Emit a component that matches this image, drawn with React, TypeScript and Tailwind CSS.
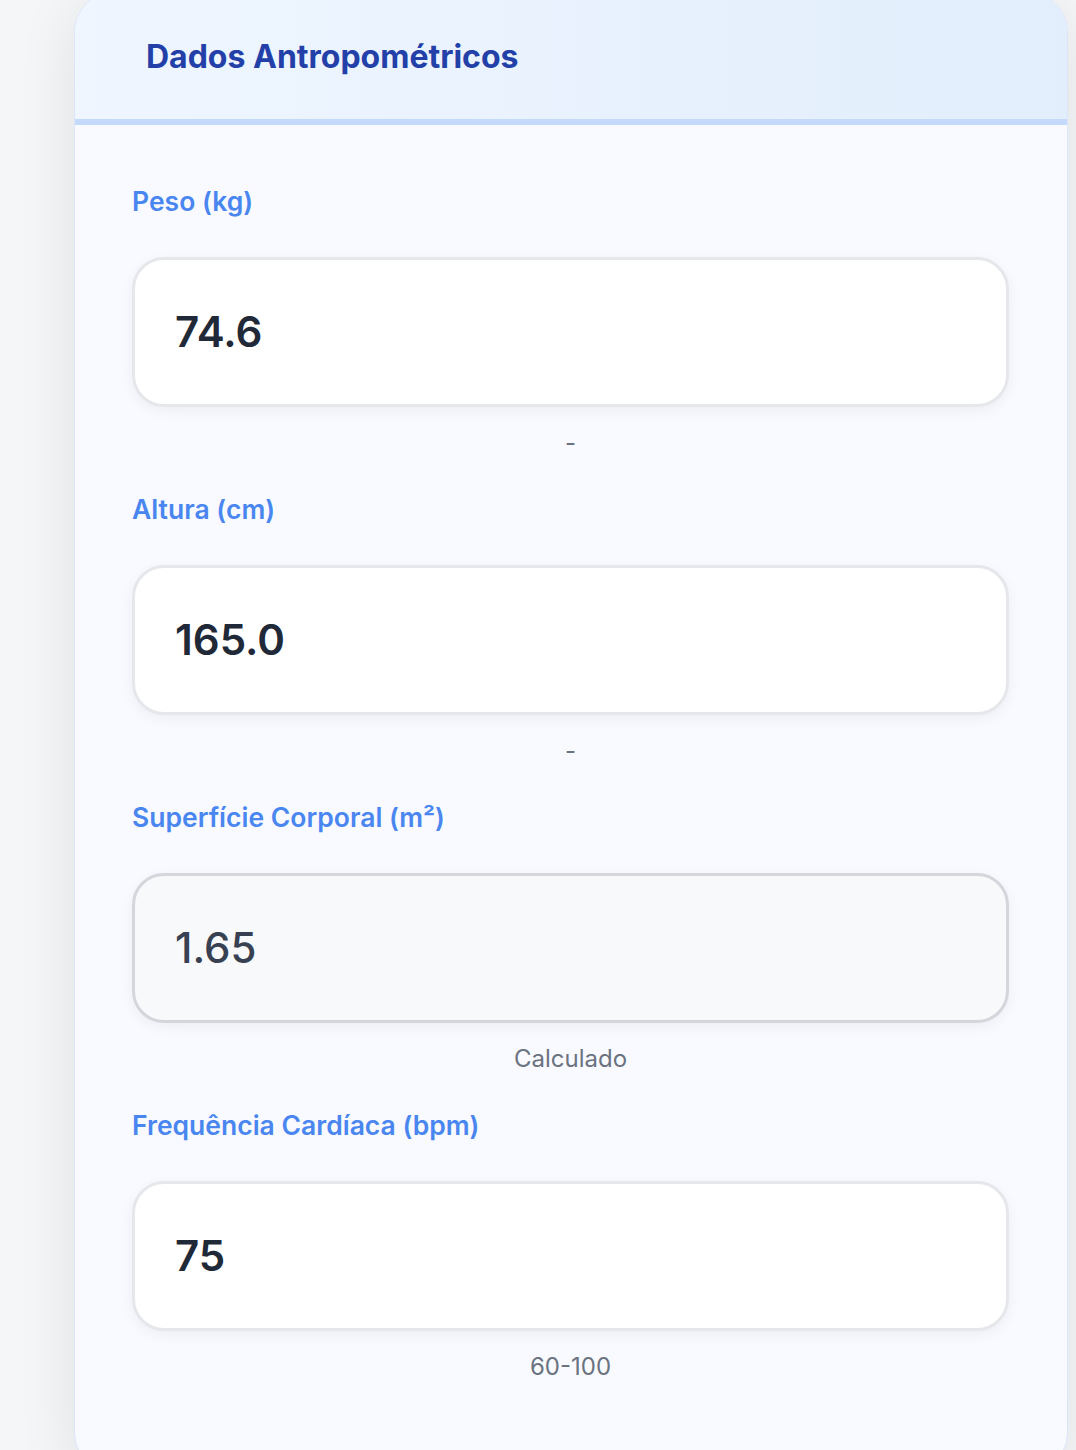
import React from "react";

type Field = { label: string; value: string; hint: string; computed?: boolean };

const fields: Field[] = [
  { label: "Peso (kg)", value: "74.6", hint: "-" },
  { label: "Altura (cm)", value: "165.0", hint: "-" },
  { label: "Superfície Corporal (m²)", value: "1.65", hint: "Calculado", computed: true },
  { label: "Frequência Cardíaca (bpm)", value: "75", hint: "60-100" },
];

export default function App() {
  return (
    <div
      className="h-[1450px] overflow-hidden bg-[#f5f6f8] pl-[74px] pr-[8px]"
      style={{ fontFamily: "Inter, 'Noto Sans', sans-serif" }}
    >
      <div className="-mt-[8px] rounded-[40px] border border-[#dde5fb] bg-[#f8faff] shadow-[0_10px_60px_rgba(0,0,0,0.09)] overflow-hidden">
        <div className="flex h-[132px] items-center border-b-[6px] border-[#c3dafa] bg-gradient-to-r from-[#eff6ff] to-[#e2eefc] pl-[71px] pt-[2px]">
          <h2 className="text-[32px] font-bold leading-[40px] text-[#2340a8]">
            Dados Antropométricos
          </h2>
        </div>
        <div className="flex flex-col gap-[33px] pl-[57px] pr-[58px] pt-[58px] pb-[90px]">
          {fields.map((f) => (
            <div key={f.label} className="flex flex-col">
              <label className="mt-[2px] mb-[40px] text-[26.5px] font-semibold leading-[32px] text-[#4a86f0]">
                {f.label}
              </label>
              <div
                className={
                  f.computed
                    ? "flex h-[150px] items-center rounded-[32px] border-[3px] border-[#d4d6db] bg-[#f8f9fb] pl-[40px] shadow-[0_4px_14px_rgba(0,0,0,0.05)]"
                    : "flex h-[150px] items-center rounded-[32px] border-[3px] border-[#e5e7eb] bg-white pl-[40px] shadow-[0_4px_14px_rgba(0,0,0,0.05)]"
                }
              >
                <span
                  className={
                    f.computed
                      ? "text-[42px] font-medium leading-none text-[#374151]"
                      : "text-[42px] font-semibold leading-none text-[#1f2937]"
                  }
                >
                  {f.value}
                </span>
              </div>
              <div className="mt-[21px] text-center text-[24px] leading-[30px] text-[#6b7280]">
                {f.hint}
              </div>
            </div>
          ))}
        </div>
      </div>
    </div>
  );
}
